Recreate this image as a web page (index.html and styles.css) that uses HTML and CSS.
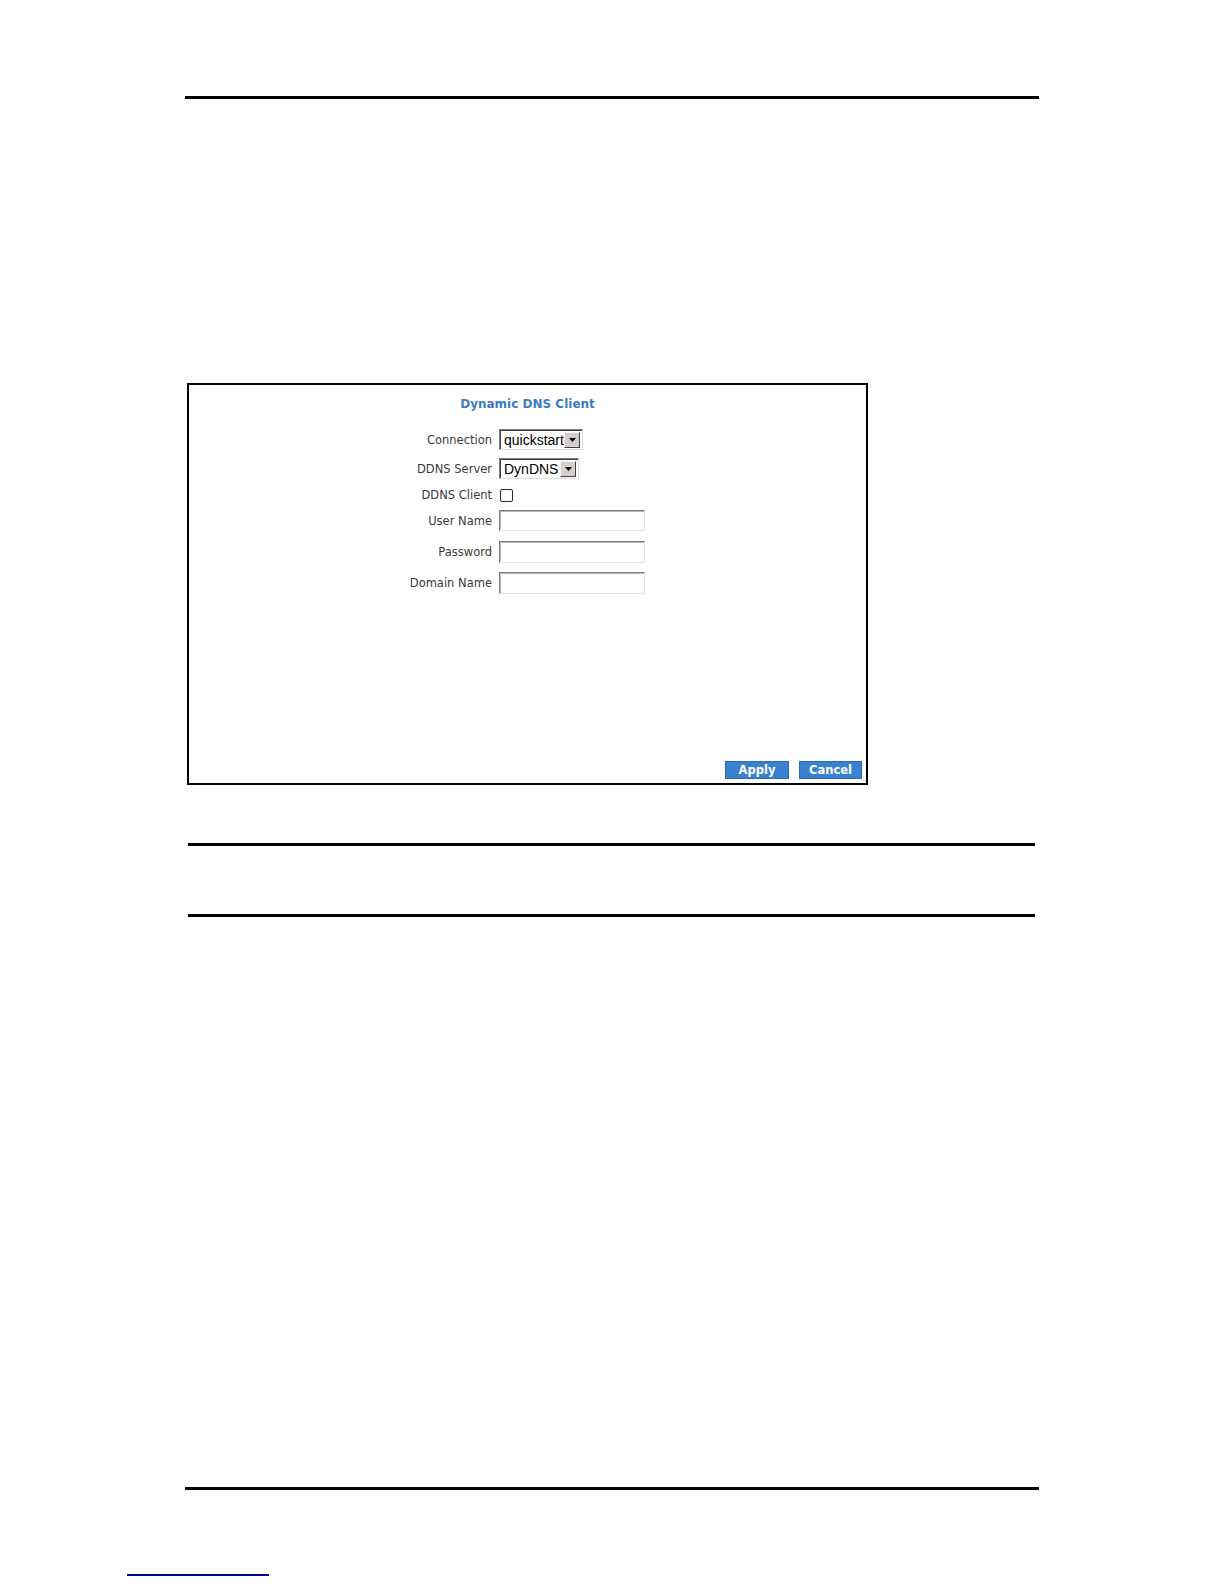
FILE: index.html
```html
<!DOCTYPE html>
<html lang="en">
<head>
<meta charset="utf-8">
<title>Dynamic DNS Client</title>
<link rel="stylesheet" href="styles.css">
</head>
<body>
<div class="page">
  <div class="rule rule-top"></div>

  <div class="figure">
    <div class="panel-title">Dynamic DNS Client</div>
    <form class="ddns-form">
      <div class="row row-conn">
        <label class="lbl">Connection</label>
        <div class="select sel-conn">
          <span class="sel-text">quickstart</span>
          <span class="sel-btn"><svg width="7" height="4" viewBox="0 0 7 4"><path d="M0 0h7L3.5 4z" fill="#000"/></svg></span>
        </div>
      </div>
      <div class="row row-server">
        <label class="lbl">DDNS Server</label>
        <div class="select sel-server">
          <span class="sel-text">DynDNS</span>
          <span class="sel-btn"><svg width="7" height="4" viewBox="0 0 7 4"><path d="M0 0h7L3.5 4z" fill="#000"/></svg></span>
        </div>
      </div>
      <div class="row row-client">
        <label class="lbl">DDNS Client</label>
        <div class="ctl"><input type="checkbox" class="chk"></div>
      </div>
      <div class="row row-user">
        <label class="lbl">User Name</label>
        <div class="ctl"><input type="text" class="txt"></div>
      </div>
      <div class="row row-pass">
        <label class="lbl">Password</label>
        <div class="ctl"><input type="password" class="txt"></div>
      </div>
      <div class="row row-domain">
        <label class="lbl">Domain Name</label>
        <div class="ctl"><input type="text" class="txt"></div>
      </div>
    </form>
    <div class="actions">
      <button type="button" class="btn btn-apply">Apply</button>
      <button type="button" class="btn btn-cancel">Cancel</button>
    </div>
  </div>

  <div class="note"></div>

  <div class="rule rule-bottom"></div>

  <div class="footlink"><a class="link-line" href="#"></a></div>
</div>
</body>
</html>
```

FILE: styles.css
```css
html, body {
  margin: 0;
  padding: 0;
  background: #ffffff;
}

body {
  font-family: "DejaVu Sans", Verdana, sans-serif;
  color: #333333;
}

.page {
  width: 1224px;
  min-height: 1584px;
  display: flex;
  flex-direction: column;
  align-items: flex-start;
}

.rule {
  height: 3px;
  background: #000000;
}

.rule-top {
  margin-top: 96px;
  margin-left: 185px;
  width: 854px;
}

.figure {
  margin-top: 284px;
  margin-left: 187px;
  width: 681px;
  height: 402px;
  box-sizing: border-box;
  border: 2px solid #000000;
  display: flex;
  flex-direction: column;
}

.panel-title {
  padding-top: 11px;
  line-height: 16px;
  height: 16px;
  text-align: center;
  font-weight: bold;
  font-size: 12px;
  color: #3b7cc0;
}

.ddns-form {
  margin: 17px 0 0 0;
  display: flex;
  flex-direction: column;
}

.row {
  display: grid;
  grid-template-columns: 303px auto;
  column-gap: 7px;
  align-items: center;
  justify-items: start;
}

.row-conn { height: 21px; }
.row-server { height: 21px; margin-top: 8px; }
.row-client { height: 20px; margin-top: 6px; }
.row-user { height: 21px; margin-top: 5px; }
.row-pass { height: 22px; margin-top: 10px; }
.row-domain { height: 22px; margin-top: 9px; }

.lbl {
  justify-self: end;
  font-size: 11.5px;
  line-height: 14px;
  color: #3a3a3a;
}

.ctl {
  display: flex;
  align-items: center;
  height: 100%;
}

.select {
  box-sizing: border-box;
  height: 21px;
  display: flex;
  align-items: stretch;
  border: 1px solid;
  border-color: #7b7b7b #dcdcdc #dcdcdc #7b7b7b;
  box-shadow: inset 1px 1px 0 #404040;
  padding: 2px 2px 1px 2px;
  background: #ffffff;
}

.sel-conn { width: 84px; }
.sel-server { width: 80px; }

.sel-text {
  flex: 1;
  font-family: "Liberation Sans", Arial, sans-serif;
  font-size: 14px;
  line-height: 16px;
  color: #000000;
  padding-left: 2px;
  white-space: nowrap;
  overflow: hidden;
}

.sel-btn {
  width: 16px;
  box-sizing: border-box;
  background: #d4d0c8;
  border: 1px solid;
  border-color: #f4f4f4 #404040 #404040 #f4f4f4;
  display: flex;
  align-items: center;
  justify-content: center;
}

.chk {
  appearance: none;
  -webkit-appearance: none;
  box-sizing: border-box;
  width: 13px;
  height: 13px;
  margin: 0 0 0 1px;
  border: 1px solid #2a2a2a;
  border-radius: 2px;
  background: #ffffff;
}

.txt {
  box-sizing: border-box;
  width: 146px;
  height: 100%;
  margin: 0;
  padding: 0;
  border: 1px solid;
  border-color: #7b7b7b #e2e2e2 #e2e2e2 #7b7b7b;
  box-shadow: inset 1px 1px 0 #b8b8b8;
  background: #ffffff;
  outline: none;
}

.row-user .txt { height: 21px; }

.actions {
  margin-top: auto;
  display: flex;
  justify-content: flex-end;
  gap: 10px;
  padding: 0 4px 4px 0;
}

.btn {
  box-sizing: border-box;
  height: 18px;
  padding: 0;
  margin: 0;
  border: 1px solid #2c6cb2;
  background: #3a82cf;
  color: #ffffff;
  font-family: "DejaVu Sans", Verdana, sans-serif;
  font-weight: bold;
  font-size: 11.5px;
  line-height: 16px;
  text-align: center;
}

.btn-apply { width: 64px; }
.btn-cancel { width: 63px; }

.note {
  margin-top: 58px;
  margin-left: 188px;
  width: 847px;
  height: 68px;
  border-top: 3px solid #000000;
  border-bottom: 3px solid #000000;
}

.rule-bottom {
  margin-top: 570px;
  margin-left: 185px;
  width: 854px;
}

.footlink {
  margin-top: 84px;
  margin-left: 127px;
  height: 2px;
  display: flex;
}

.link-line {
  display: block;
  width: 142px;
  height: 0;
  border-bottom: 2px solid #000080;
}
```
